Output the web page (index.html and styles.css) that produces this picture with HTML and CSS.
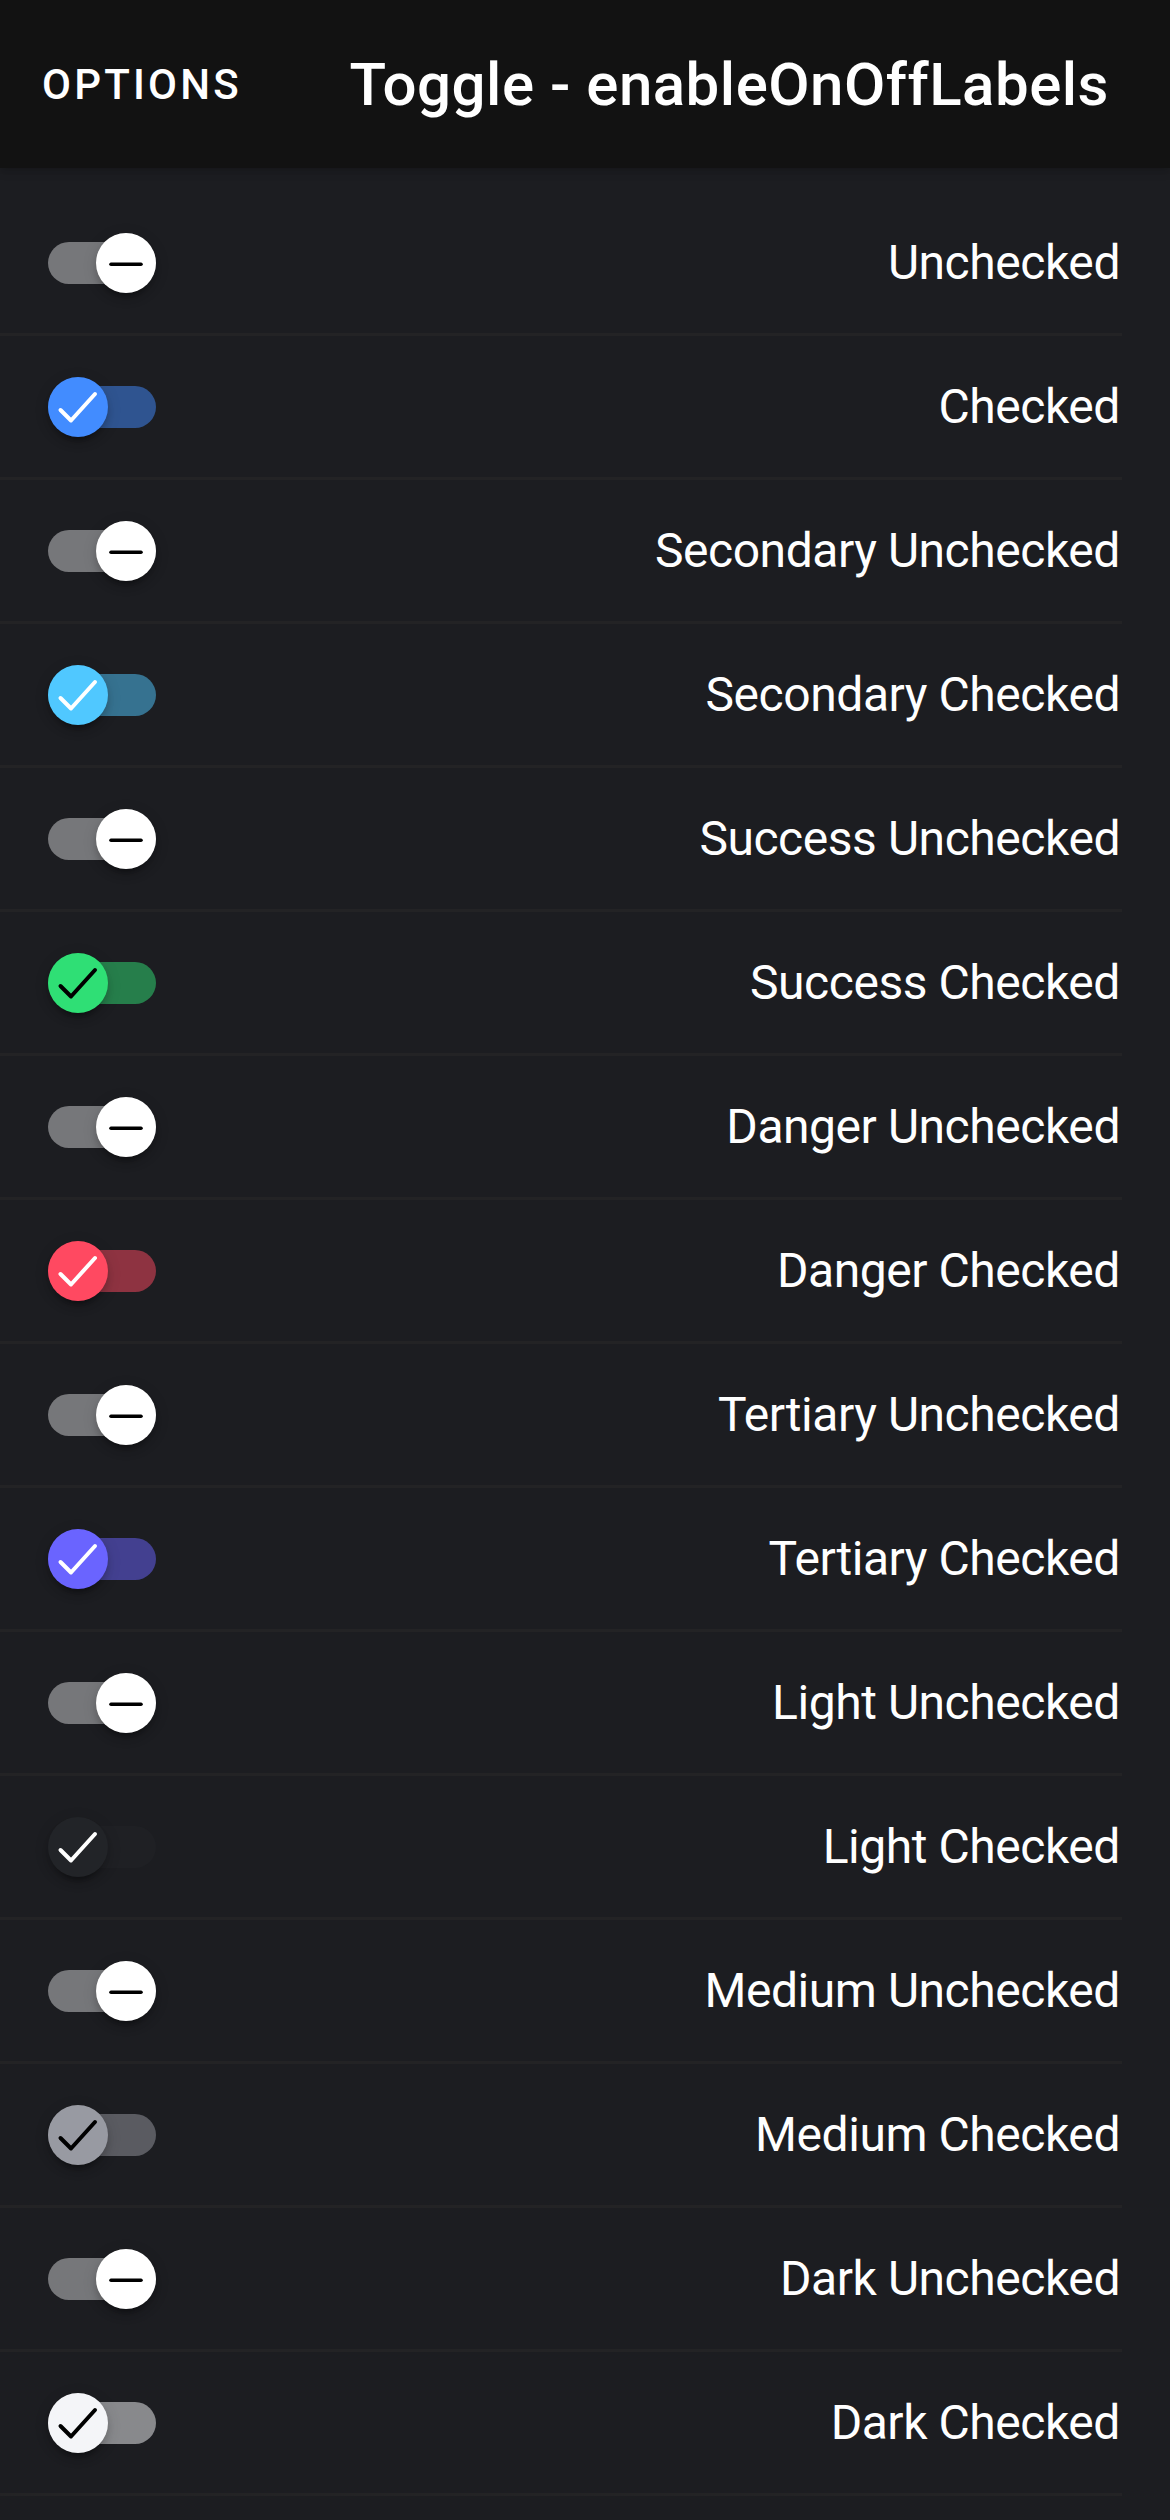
FILE: index.html
```html
<!DOCTYPE html>
<html lang="en">
<head>
<meta charset="utf-8">
<title>Toggle - enableOnOffLabels</title>
<link rel="stylesheet" href="styles.css">
</head>
<body>
<header class="toolbar">
  <span class="options">Options</span>
  <h1 class="title">Toggle - enableOnOffLabels</h1>
</header>
<main class="list">
  <div class="row"><div class="toggle off"><span class="knob"><svg viewBox="0 0 60 60"><line x1="15" y1="31.3" x2="45" y2="31.3"/></svg></span></div><span class="label">Unchecked</span></div>
  <div class="row"><div class="toggle on primary"><span class="knob"><svg viewBox="0 0 60 60"><polyline points="12.5,33 23,43.5 47,17"/></svg></span></div><span class="label">Checked</span></div>
  <div class="row"><div class="toggle off"><span class="knob"><svg viewBox="0 0 60 60"><line x1="15" y1="31.3" x2="45" y2="31.3"/></svg></span></div><span class="label">Secondary Unchecked</span></div>
  <div class="row"><div class="toggle on secondary"><span class="knob"><svg viewBox="0 0 60 60"><polyline points="12.5,33 23,43.5 47,17"/></svg></span></div><span class="label">Secondary Checked</span></div>
  <div class="row"><div class="toggle off"><span class="knob"><svg viewBox="0 0 60 60"><line x1="15" y1="31.3" x2="45" y2="31.3"/></svg></span></div><span class="label">Success Unchecked</span></div>
  <div class="row"><div class="toggle on success"><span class="knob"><svg viewBox="0 0 60 60"><polyline points="12.5,33 23,43.5 47,17"/></svg></span></div><span class="label">Success Checked</span></div>
  <div class="row"><div class="toggle off"><span class="knob"><svg viewBox="0 0 60 60"><line x1="15" y1="31.3" x2="45" y2="31.3"/></svg></span></div><span class="label">Danger Unchecked</span></div>
  <div class="row"><div class="toggle on danger"><span class="knob"><svg viewBox="0 0 60 60"><polyline points="12.5,33 23,43.5 47,17"/></svg></span></div><span class="label">Danger Checked</span></div>
  <div class="row"><div class="toggle off"><span class="knob"><svg viewBox="0 0 60 60"><line x1="15" y1="31.3" x2="45" y2="31.3"/></svg></span></div><span class="label">Tertiary Unchecked</span></div>
  <div class="row"><div class="toggle on tertiary"><span class="knob"><svg viewBox="0 0 60 60"><polyline points="12.5,33 23,43.5 47,17"/></svg></span></div><span class="label">Tertiary Checked</span></div>
  <div class="row"><div class="toggle off"><span class="knob"><svg viewBox="0 0 60 60"><line x1="15" y1="31.3" x2="45" y2="31.3"/></svg></span></div><span class="label">Light Unchecked</span></div>
  <div class="row"><div class="toggle on light"><span class="knob"><svg viewBox="0 0 60 60"><polyline points="12.5,33 23,43.5 47,17"/></svg></span></div><span class="label">Light Checked</span></div>
  <div class="row"><div class="toggle off"><span class="knob"><svg viewBox="0 0 60 60"><line x1="15" y1="31.3" x2="45" y2="31.3"/></svg></span></div><span class="label">Medium Unchecked</span></div>
  <div class="row"><div class="toggle on medium"><span class="knob"><svg viewBox="0 0 60 60"><polyline points="12.5,33 23,43.5 47,17"/></svg></span></div><span class="label">Medium Checked</span></div>
  <div class="row"><div class="toggle off"><span class="knob"><svg viewBox="0 0 60 60"><line x1="15" y1="31.3" x2="45" y2="31.3"/></svg></span></div><span class="label">Dark Unchecked</span></div>
  <div class="row"><div class="toggle on dark"><span class="knob"><svg viewBox="0 0 60 60"><polyline points="12.5,33 23,43.5 47,17"/></svg></span></div><span class="label">Dark Checked</span></div>
</main>
</body>
</html>
```
FILE: styles.css
```css
* { box-sizing: border-box; }

html, body {
  margin: 0;
  padding: 0;
  background: #1c1d21;
  font-family: Roboto, "Noto Sans", "Liberation Sans", sans-serif;
  color: #ffffff;
}

body {
  width: 1170px;
  min-height: 2520px;
}

.toolbar {
  position: relative;
  z-index: 2;
  height: 168px;
  background: #121212;
  display: flex;
  align-items: center;
  justify-content: space-between;
  padding: 0 61px 0 42px;
  box-shadow: 0 3px 6px -2px rgba(0,0,0,0.15), 0 6px 8px 0 rgba(0,0,0,0.08);
}

.options {
  font-size: 42px;
  font-weight: 500;
  text-transform: uppercase;
  letter-spacing: 3.2px;
  color: #ffffff;
}

.title {
  margin: 0;
  font-size: 60px;
  font-weight: 500;
  color: #ffffff;
  letter-spacing: 0.5px;
}

.list {
  display: flex;
  flex-direction: column;
  padding-top: 24px;
}

.row {
  height: 144px;
  margin-right: 48px;
  padding-left: 48px;
  display: flex;
  align-items: center;
  justify-content: space-between;
  border-bottom: 3px solid #232325;
}

.label {
  font-size: 48px;
  font-weight: 400;
  color: #ffffff;
  letter-spacing: -0.45px;
  margin-right: 2px;
}

.toggle {
  position: relative;
  width: 108px;
  height: 42px;
  border-radius: 21px;
  background: var(--track, #76777a);
  margin-top: 1px;
}

.knob {
  position: absolute;
  top: -9px;
  width: 60px;
  height: 60px;
  border-radius: 50%;
  background: var(--knob, #ffffff);
  color: var(--mark, #000000);
  box-shadow: 0 9px 3px -6px rgba(0,0,0,0.2), 0 6px 6px 0 rgba(0,0,0,0.14), 0 3px 15px 0 rgba(0,0,0,0.12);
  display: flex;
}

.knob svg {
  width: 60px;
  height: 60px;
  fill: none;
  stroke: currentColor;
  stroke-linecap: round;
  stroke-linejoin: round;
}

.off .knob { right: 0; }
.off .knob svg { stroke-width: 3.6; }

.on .knob { left: 0; }
.on .knob svg { stroke-width: 4; }

.primary   { --knob: #428cff; --track: rgba(66,140,255,0.5);  --mark: #ffffff; }
.secondary { --knob: #50c8ff; --track: rgba(80,200,255,0.5);  --mark: #ffffff; }
.success   { --knob: #2fdf75; --track: rgba(47,223,117,0.5);  --mark: #000000; }
.danger    { --knob: #ff4961; --track: rgba(255,73,97,0.5);   --mark: #ffffff; }
.tertiary  { --knob: #6a64ff; --track: rgba(106,100,255,0.5); --mark: #ffffff; }
.light     { --knob: #222428; --track: rgba(34,36,40,0.5);    --mark: #ffffff; }
.medium    { --knob: #989aa2; --track: rgba(152,154,162,0.5); --mark: #000000; }
.dark      { --knob: #f4f5f8; --track: rgba(244,245,248,0.5); --mark: #000000; }
```
